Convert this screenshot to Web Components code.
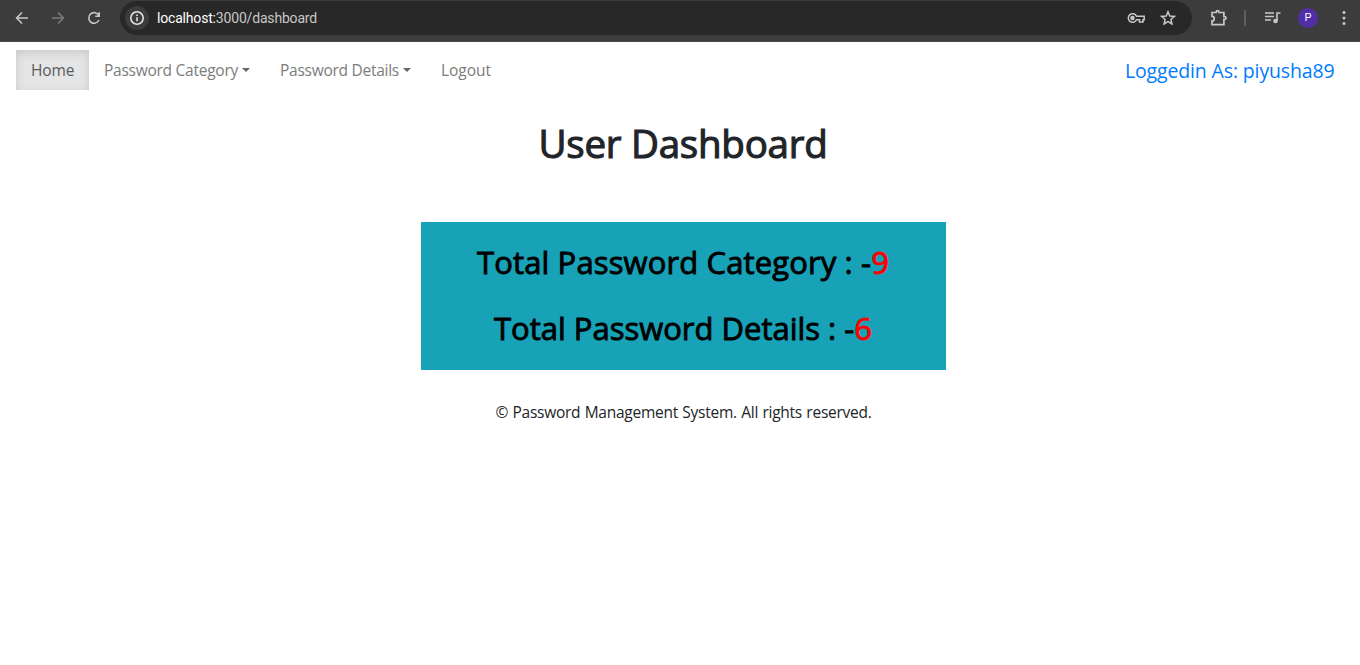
<!DOCTYPE html>
<html lang="en">
<head>
<meta charset="utf-8">
<title>User Dashboard</title>
<style>
html,body{margin:0;height:100%;background:#fff;overflow:hidden}
body{font-family:"Open Sans","Noto Sans",sans-serif;font-weight:400;color:#212529}
</style>
</head>
<body>
<app-shell></app-shell>
<script>
const define = (name, html, ready) => customElements.define(name, class extends HTMLElement {
  connectedCallback() {
    if (this.shadowRoot) return;
    const t = document.createElement('template');
    t.innerHTML = html;
    this.attachShadow({mode: 'open'}).append(t.content.cloneNode(true));
    if (ready) ready.call(this);
  }
});

// Single line of text whose tracking is tuned so it spans the given width.
define('fit-text', `<style>:host{display:inline-block;white-space:nowrap}span{display:inline-block}</style><span><slot></slot></span>`, function () {
  const span = this.shadowRoot.querySelector('span');
  const want = +this.getAttribute('width');
  const n = this.textContent.length;
  this.style.width = want + 'px';
  span.style.letterSpacing = ((want - span.getBoundingClientRect().width) / n) + 'px';
});

define('browser-bar', `<style>
:host{display:flex;align-items:flex-start;height:42px;background:#3c3c3c;box-sizing:border-box;border-bottom:1px solid #4a4a4a;color:#c7c7c7}
svg{display:block;fill:none;stroke:currentColor;stroke-width:1.6;flex:none}
.nav{display:flex;gap:20px;padding:10px 0 0 14px;width:106px;box-sizing:content-box}
.dim{color:#7b7b7b}
.url{display:flex;align-items:center;height:34px;margin-top:1px;width:1072px;box-sizing:border-box;border-radius:17px;background:#282828;padding:0 16px 0 5px;font:14px/20px Roboto,sans-serif;color:#c7c7c7}
.info{display:grid;place-items:center;width:24px;height:24px;border-radius:50%;background:#3c3c3c;color:#e3e3e3;margin-right:8px}
.key{margin-left:auto;margin-right:15px}
.tools{display:flex;align-items:center;height:34px;padding-top:1px;margin-left:18px}
i{width:2px;height:16px;background:#5f5f5f;margin:0 18px 0 16px}
.avatar{width:20px;height:20px;border-radius:50%;background:#512da8;color:#fff;font:11px/20px Roboto,sans-serif;text-align:center;margin:0 18px 0 17px}
</style>
<div class="nav">
<svg width="16" height="16" viewBox="0 0 16 16"><path d="M14 8H3M8 2.5 2.6 8 8 13.500"/></svg>
<svg class="dim" width="16" height="16" viewBox="0 0 16 16"><path d="M2 8h11M8 2.500 13.400 8 8 13.500"/></svg>
<svg width="16" height="16" viewBox="0 0 16 16"><path d="M13 10A5.300 5.300 0 1 1 12.800 5.500M13.200 2.200V6.200H9.200"/></svg>
</div>
<div class="url">
<span class="info"><svg width="16" height="16" viewBox="0 0 16 16"><circle cx="8" cy="8" r="6.200"/><path d="M8 7.200v4M8 4.500v1.600"/></svg></span>
<fit-text width="160"><b style="font-weight:400;color:#fff">localhost:</b>3000/dashboard</fit-text>
<svg class="key" width="18" height="14" viewBox="0 0 18 14" style="stroke-width:1.500"><path d="M9.500 5.200A4.300 4.300 0 1 0 9.500 8.800H12.500V11H16V8.800H17.200V5.200Z"/><circle cx="5.500" cy="7" r="1.500" fill="currentColor"/></svg>
<svg width="16" height="16" viewBox="0 0 16 16" style="stroke-width:1.500"><path d="M8 1.700 9.800 6l4.600.4-3.500 3 1.050 4.550L8 11.550 4.050 13.950 5.100 9.400 1.600 6.400 6.200 6Z"/></svg>
</div>
<div class="tools">
<svg width="18" height="18" viewBox="0 0 18 18" style="stroke-width:1.700"><path d="M2 3.500H6.200V2.900a1.400 1.200 0 0 1 2.800 0V3.500H13.900V7.600h.7a1.400 1.400 0 0 1 0 2.800h-.7V15.600H2V11.900a2.200 2.200 0 0 0 0-4.500Z"/></svg>
<i></i>
<svg width="17" height="16" viewBox="0 0 17 16" style="stroke-width:1.600"><path d="M1 3h9M1 6.500h9M1 10h6M13 11V3h3.500"/><circle cx="11.500" cy="11" r="1.500" fill="currentColor"/></svg>
<span class="avatar">P</span>
<svg width="16" height="16" viewBox="0 0 16 16" style="fill:currentColor;stroke:none"><circle cx="8" cy="2.600" r="1.500"/><circle cx="8" cy="8" r="1.500"/><circle cx="8" cy="13.400" r="1.500"/></svg>
</div>`);

define('nav-item', `<style>
:host{display:flex;align-items:center;height:40px;padding:0 15px;box-sizing:border-box;font-size:15.500px;line-height:20px;color:#7c7c7c}
:host([active]){width:73px;color:#5a5a5a;background:#e5e5e5;box-shadow:inset 0 3px 8px rgba(0,0,0,.125)}
.caret{display:none;width:0;height:0;margin-left:4px;border:4px solid transparent;border-top-color:#666;border-bottom:0}
:host([menu]) .caret{display:block}
</style><slot></slot><span class="caret"></span>`);

define('site-nav', `<style>
:host{display:flex;padding:8px 25.500px 0 16px;height:50px;box-sizing:border-box}
.user{margin-left:auto;font-size:19.500px;line-height:40px;color:#007bff;padding-top:1px}
</style>
<nav-item active><fit-text width="43.500">Home</fit-text></nav-item>
<nav-item menu><fit-text width="134">Password Category</fit-text></nav-item>
<nav-item menu><fit-text width="119">Password Details</fit-text></nav-item>
<nav-item><fit-text width="50">Logout</fit-text></nav-item>
<span class="user"><fit-text width="209.500">Loggedin As: piyusha89</fit-text></span>`);

define('total-line', `<style>
:host{display:block;font-size:31px;line-height:38px;color:#000;-webkit-text-stroke:.9px;margin-left:-1px}
</style><slot></slot>`);

define('dashboard-page', `<style>
:host{display:flex;flex-direction:column;align-items:center;padding:27px 0 0 7px}
h1{margin:0 0 0 -1px;font-size:38.500px;font-weight:400;line-height:48px;color:#212529;-webkit-text-stroke:1.1px}
section{display:flex;flex-direction:column;align-items:center;gap:28px;margin-top:55px;width:525px;height:148px;box-sizing:border-box;padding-top:21px;background:#17a2b8}
footer{margin-top:30px;font-size:15.500px;line-height:24px;color:#212529;word-spacing:.04em}
</style>
<h1><fit-text width="289">User Dashboard</fit-text></h1>
<section>
<total-line><fit-text width="412">Total Password Category : -<em style="color:red;font-style:normal">9</em></fit-text></total-line>
<total-line><fit-text width="378">Total Password Details : -<em style="color:red;font-style:normal">6</em></fit-text></total-line>
</section>
<footer><fit-text width="376">© Password Management System. All rights reserved.</fit-text></footer>`);

define('app-shell', `<style>:host{display:block}</style>
<browser-bar></browser-bar><site-nav></site-nav><dashboard-page></dashboard-page>`);
</script>
</body>
</html>
